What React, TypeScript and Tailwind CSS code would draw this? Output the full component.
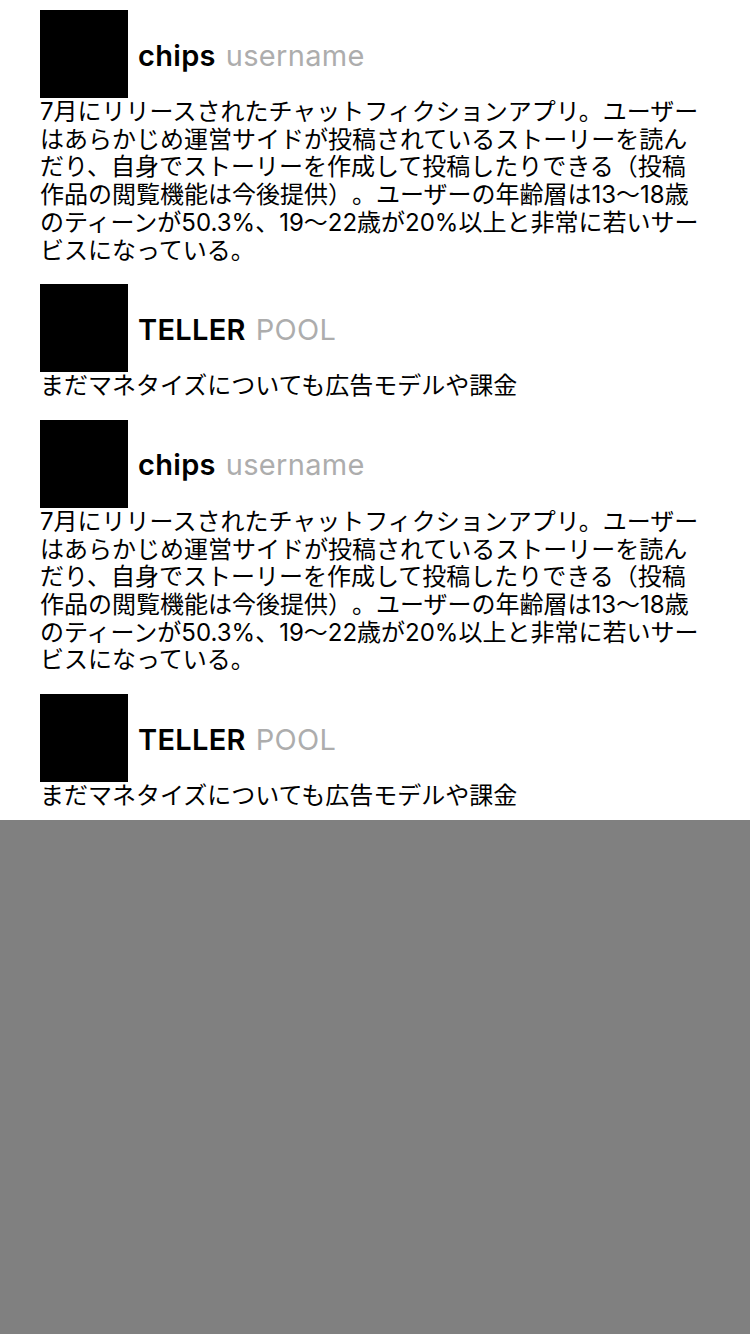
const posts = [
  {
    name: "chips",
    sub: "username",
    body: "7月にリリースされたチャットフィクションアプリ。ユーザーはあらかじめ運営サイドが投稿されているストーリーを読んだり、自身でストーリーを作成して投稿したりできる（投稿作品の閲覧機能は今後提供）。ユーザーの年齢層は13〜18歳のティーンが50.3%、19〜22歳が20%以上と非常に若いサービスになっている。",
  },
  {
    name: "TELLER",
    sub: "POOL",
    body: "まだマネタイズについても広告モデルや課金",
  },
];

const Post = ({ name, sub, body }: { name: string; sub: string; body: string }) => (
  <div className="py-2.5">
    <div className="flex items-center">
      <div className="w-[88px] h-[88px] bg-black shrink-0" />
      <div className="ml-2.5 text-[29px] leading-none tracking-[0.3px] pt-0.5">
        <span className="font-semibold text-black">{name}</span>
        <span className="ml-2.5 text-[#adadad]">{sub}</span>
      </div>
    </div>
    <p className="text-[24px] leading-[27.7px] text-black [line-break:strict] [text-spacing-trim:space-all]">
      {body}
    </p>
  </div>
);

export default function App() {
  const list = [...posts, ...posts];
  return (
    <div
      className="min-h-screen bg-[#808080]"
      style={{ fontFamily: 'Inter, "Noto Sans CJK JP", sans-serif' }}
    >
      <div className="bg-white pl-10 pr-[44px]">
        {list.map((p, i) => (
          <Post key={i} {...p} />
        ))}
      </div>
    </div>
  );
}
